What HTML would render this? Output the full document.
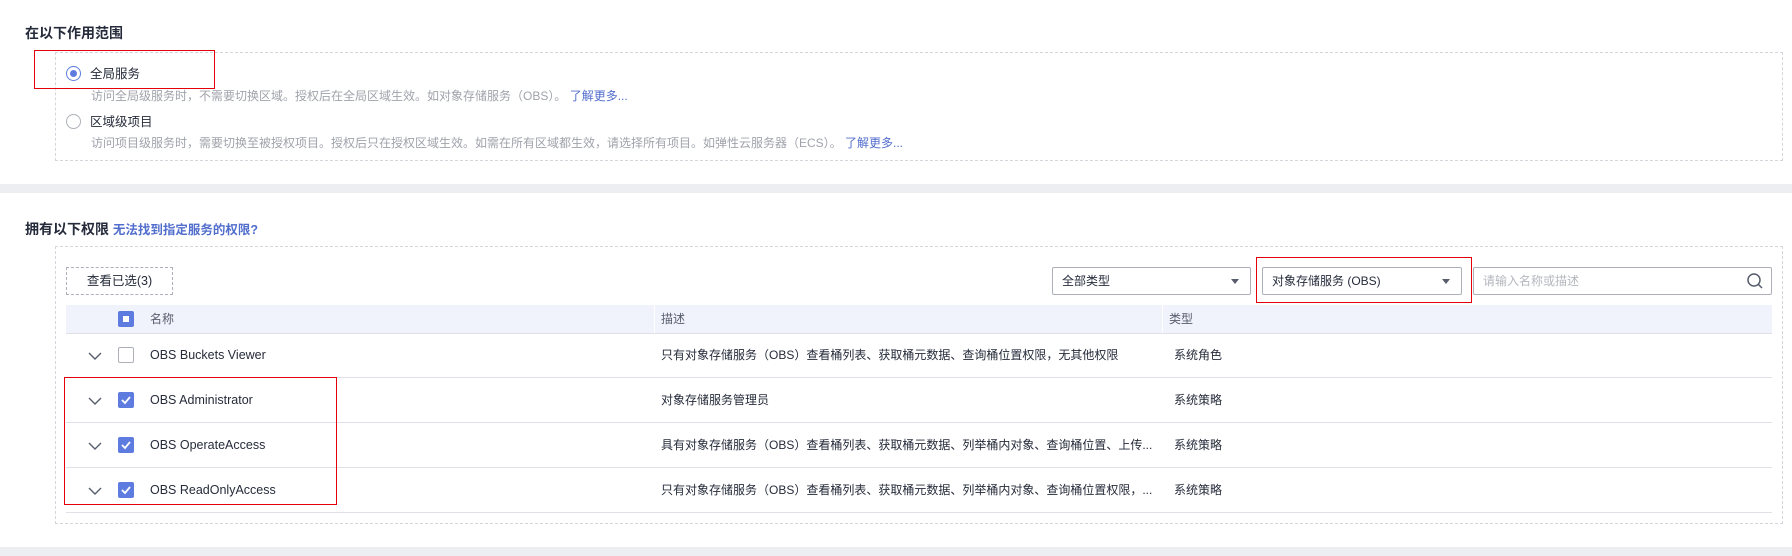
<!DOCTYPE html>
<html><head><meta charset="utf-8"><style>
*{box-sizing:border-box;margin:0;padding:0}
body{width:1792px;height:556px;background:#fff;position:relative;overflow:hidden;font-family:"Liberation Sans","Noto Sans CJK SC",sans-serif;color:#252b3a;font-size:12px}
.a{position:absolute;white-space:nowrap;line-height:16px}
.band{position:absolute;left:0;width:1792px;background:#eceef2}
.dash{position:absolute;border:1px dashed #d4d6dc}
.red{position:absolute;border:1.5px solid #e3000b}
.title{font-size:14px;font-weight:bold;color:#252b3a;line-height:18px}
.gray{color:#a0a3ab}
.link{color:#526ecc}
.radio{position:absolute;width:15px;height:15px;border-radius:50%;border:1px solid #adb0b8;background:#fff}
.radio.on{border-color:#5e7ce0}
.radio.on::after{content:"";position:absolute;left:3px;top:3px;width:7px;height:7px;border-radius:50%;background:#5e7ce0}
.sel{position:absolute;height:28px;border:1px solid #adb0b8;border-radius:2px;background:#fff;padding-left:9px;line-height:26px;white-space:nowrap}
.sel.dd::after{content:"";position:absolute;right:11px;top:11px;border-left:4px solid transparent;border-right:4px solid transparent;border-top:5px solid #575d6c}
.cb{position:absolute;width:16px;height:16px;border:1px solid #adb0b8;border-radius:2px;background:#fff}
.cb.on{background:#5e7ce0;border-color:#5e7ce0}
.line{position:absolute;left:66px;width:1706px;height:1px;background:#dfe1e6}
.chev{position:absolute;width:16px;height:10px}
</style></head><body>
<div class="a title" style="left:25px;top:24px">在以下作用范围</div>
<div class="dash" style="left:55px;top:52px;width:1728px;height:109px"></div>
<div class="radio on" style="left:66px;top:66px"></div>
<div class="a" style="left:90px;top:66px;font-size:12.5px">全局服务</div>
<div class="a gray" style="left:91px;top:88px">访问全局级服务时，不需要切换区域。授权后在全局区域生效。如对象存储服务（OBS）。 <span class="link">了解更多...</span></div>
<div class="radio" style="left:66px;top:114px"></div>
<div class="a" style="left:90px;top:114px;font-size:12.5px">区域级项目</div>
<div class="a gray" style="left:91px;top:135px">访问项目级服务时，需要切换至被授权项目。授权后只在授权区域生效。如需在所有区域都生效，请选择所有项目。如弹性云服务器（ECS）。 <span class="link">了解更多...</span></div>
<div class="red" style="left:34px;top:50px;width:181px;height:39px"></div>

<div class="band" style="top:184px;height:9px"></div>

<div class="a title" style="left:25px;top:220px">拥有以下权限 <span class="link" style="font-size:12.5px">无法找到指定服务的权限?</span></div>
<div class="dash" style="left:55px;top:246px;width:1728px;height:278px"></div>
<div class="a" style="left:66px;top:267px;width:107px;height:28px;border:1px dashed #adb0b8;text-align:center;line-height:26px;font-size:12.5px">查看已选(3)</div>
<div class="sel dd" style="left:1052px;top:267px;width:199px">全部类型</div>
<div class="sel dd" style="left:1262px;top:267px;width:200px">对象存储服务 (OBS)</div>
<div class="red" style="left:1256px;top:257px;width:216px;height:46px"></div>
<div class="sel" style="left:1473px;top:267px;width:299px;color:#b4b7be">请输入名称或描述</div>
<svg class="a" style="left:1746px;top:272px" width="18" height="18" viewBox="0 0 18 18"><circle cx="8" cy="8" r="6" fill="none" stroke="#575d6c" stroke-width="1.5"/><path d="M12.3 12.3 L16 16" stroke="#575d6c" stroke-width="1.5"/></svg>

<div class="a" style="left:66px;top:305px;width:1706px;height:28px;background:#f0f3fb"></div>
<div class="a" style="left:654px;top:305px;width:1px;height:28px;background:#fff"></div>
<div class="a" style="left:1162px;top:305px;width:1px;height:28px;background:#fff"></div>
<div class="cb on" style="left:118px;top:311px"><div style="position:absolute;left:4px;top:4px;width:6px;height:6px;background:#fff"></div></div>
<div class="a" style="left:150px;top:311px;color:#575d6c">名称</div>
<div class="a" style="left:661px;top:311px;color:#575d6c">描述</div>
<div class="a" style="left:1169px;top:311px;color:#575d6c">类型</div>
<div class="line" style="top:333px"></div>

<svg class="chev" style="left:87px;top:351px" viewBox="0 0 16 10"><path d="M2 2 L8 8 L14 2" fill="none" stroke="#575d6c" stroke-width="1.4"/></svg>
<div class="cb" style="left:118px;top:347px"></div>
<div class="a" style="left:150px;top:347px;font-size:12.5px">OBS Buckets Viewer</div>
<div class="a" style="left:661px;top:347px">只有对象存储服务（OBS）查看桶列表、获取桶元数据、查询桶位置权限，无其他权限</div>
<div class="a" style="left:1174px;top:347px">系统角色</div>
<div class="line" style="top:377px"></div>

<svg class="chev" style="left:87px;top:396px" viewBox="0 0 16 10"><path d="M2 2 L8 8 L14 2" fill="none" stroke="#575d6c" stroke-width="1.4"/></svg>
<div class="cb on" style="left:118px;top:392px"><svg width="14" height="14" viewBox="0 0 14 14"><path d="M3 7 L6 10 L11 4" fill="none" stroke="#fff" stroke-width="1.8"/></svg></div>
<div class="a" style="left:150px;top:392px;font-size:12.5px">OBS Administrator</div>
<div class="a" style="left:661px;top:392px">对象存储服务管理员</div>
<div class="a" style="left:1174px;top:392px">系统策略</div>
<div class="line" style="top:422px"></div>

<svg class="chev" style="left:87px;top:441px" viewBox="0 0 16 10"><path d="M2 2 L8 8 L14 2" fill="none" stroke="#575d6c" stroke-width="1.4"/></svg>
<div class="cb on" style="left:118px;top:437px"><svg width="14" height="14" viewBox="0 0 14 14"><path d="M3 7 L6 10 L11 4" fill="none" stroke="#fff" stroke-width="1.8"/></svg></div>
<div class="a" style="left:150px;top:437px;font-size:12.5px">OBS OperateAccess</div>
<div class="a" style="left:661px;top:437px">具有对象存储服务（OBS）查看桶列表、获取桶元数据、列举桶内对象、查询桶位置、上传...</div>
<div class="a" style="left:1174px;top:437px">系统策略</div>
<div class="line" style="top:467px"></div>

<svg class="chev" style="left:87px;top:486px" viewBox="0 0 16 10"><path d="M2 2 L8 8 L14 2" fill="none" stroke="#575d6c" stroke-width="1.4"/></svg>
<div class="cb on" style="left:118px;top:482px"><svg width="14" height="14" viewBox="0 0 14 14"><path d="M3 7 L6 10 L11 4" fill="none" stroke="#fff" stroke-width="1.8"/></svg></div>
<div class="a" style="left:150px;top:482px;font-size:12.5px">OBS ReadOnlyAccess</div>
<div class="a" style="left:661px;top:482px">只有对象存储服务（OBS）查看桶列表、获取桶元数据、列举桶内对象、查询桶位置权限，...</div>
<div class="a" style="left:1174px;top:482px">系统策略</div>
<div class="line" style="top:512px"></div>
<div class="red" style="left:64px;top:377px;width:273px;height:128px"></div>

<div class="band" style="top:547px;height:9px"></div>
</body></html>
